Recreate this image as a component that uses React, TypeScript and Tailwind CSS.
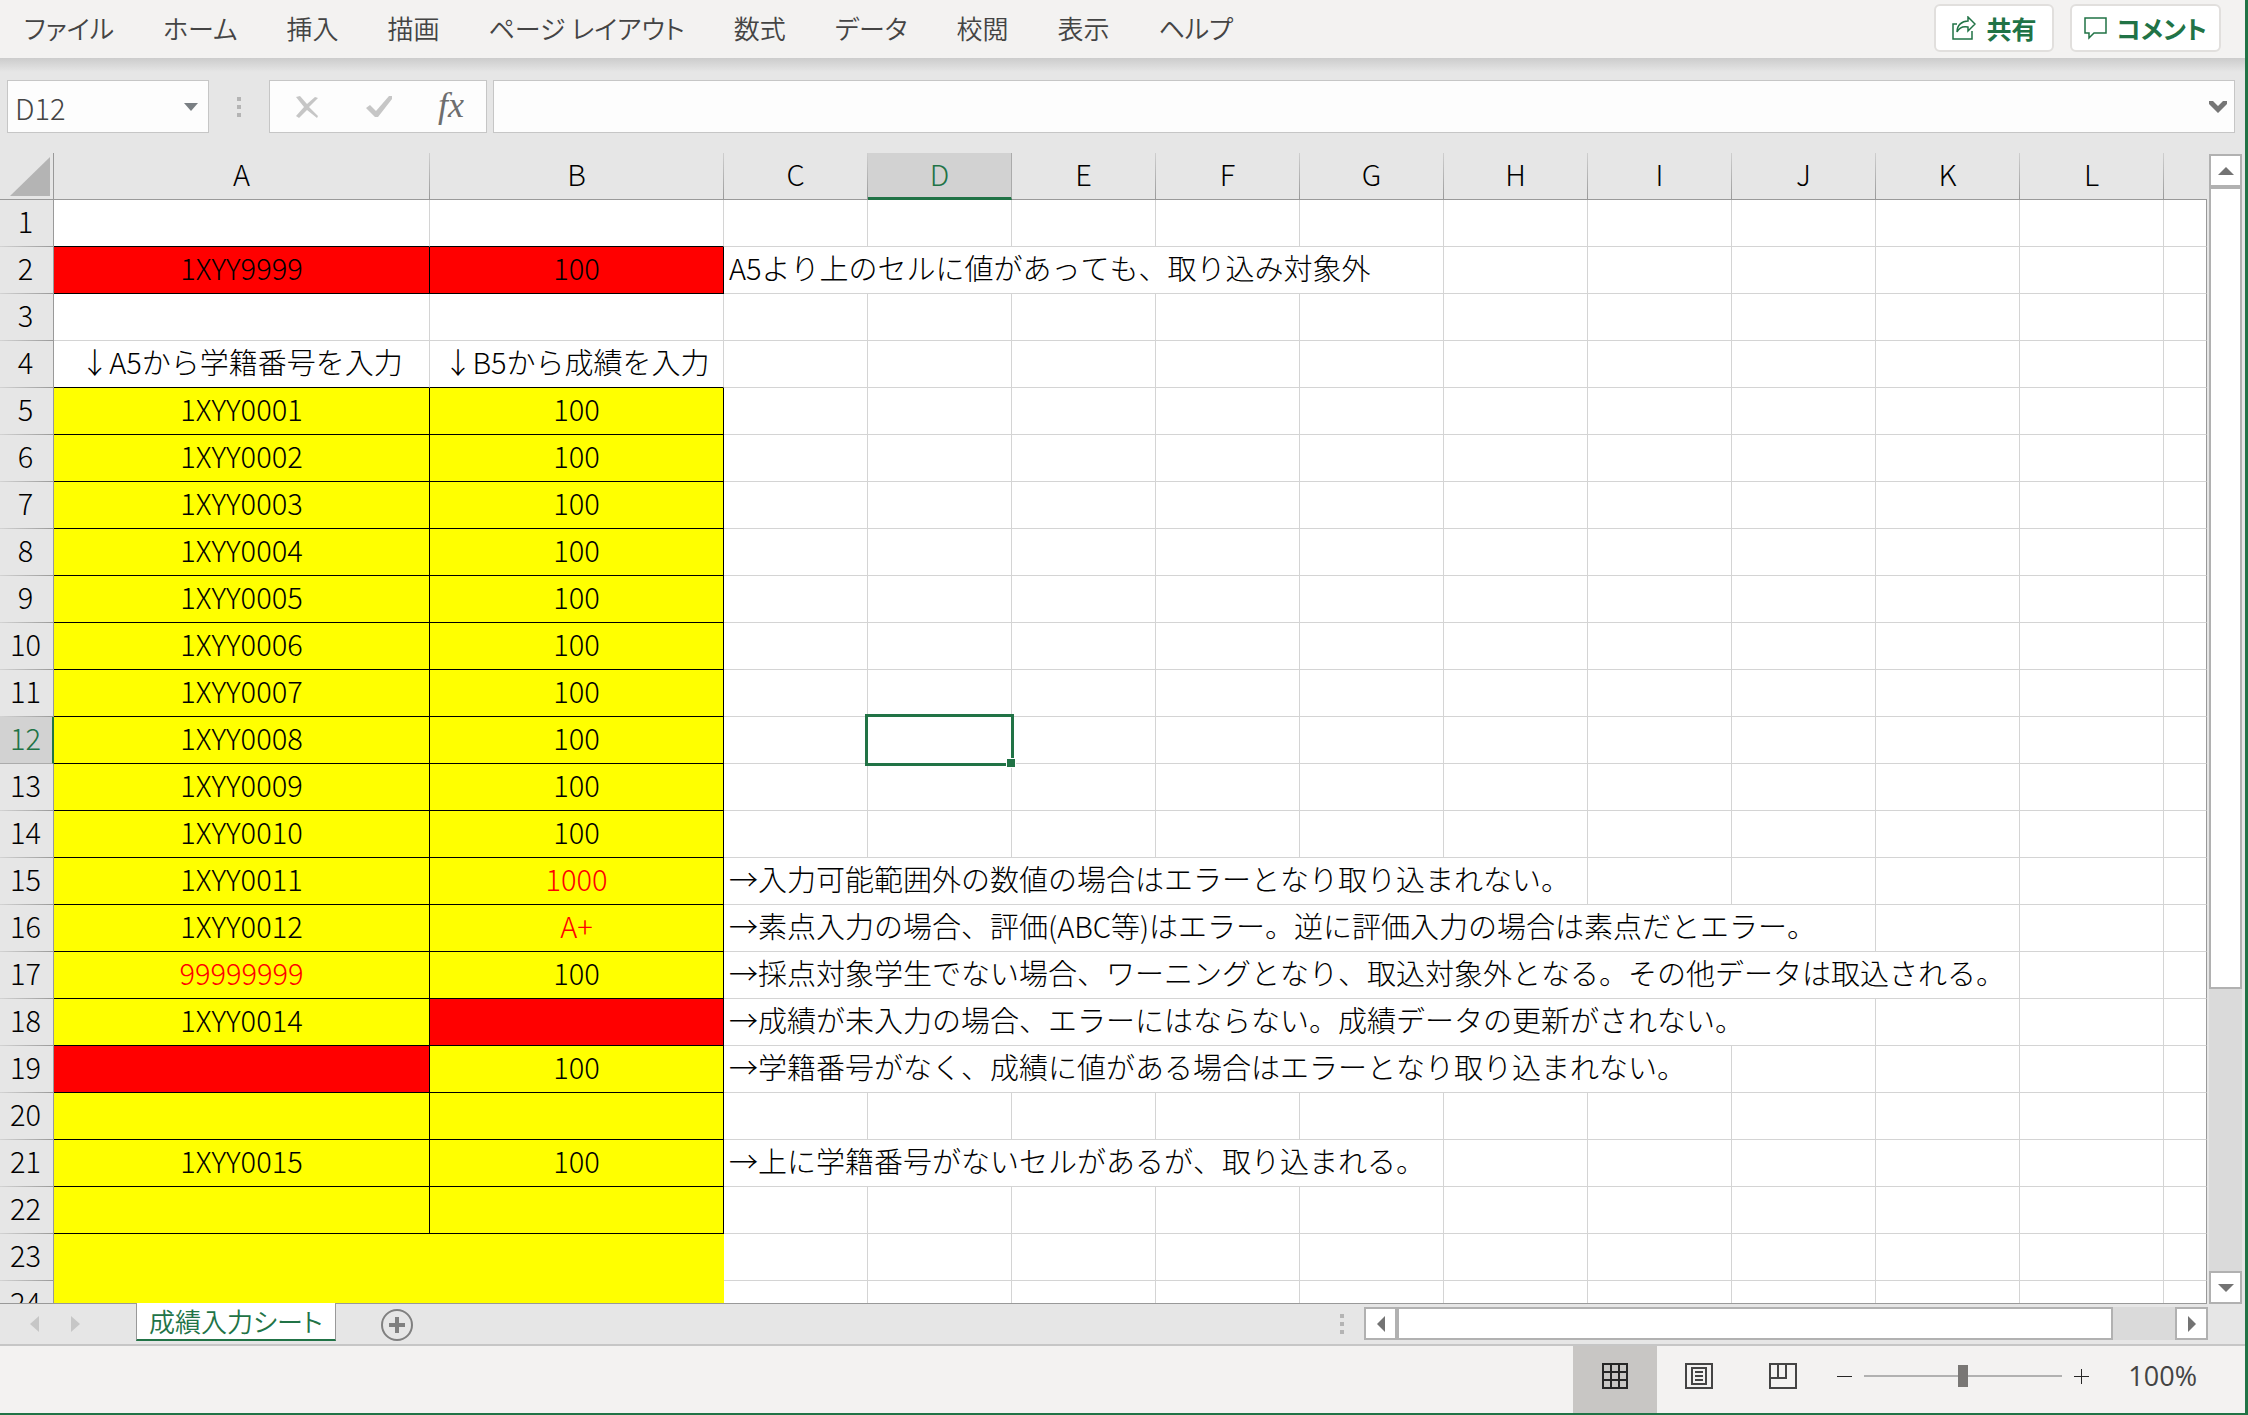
import React, { ReactNode, useState } from "react";

const LINE = "border-[#d4d4d4]";
const COLUMNS = ["A", "B", "C", "D", "E", "F", "G", "H", "I", "J", "K", "L"];
const MENUS = [
  "ファイル",
  "ホーム",
  "挿入",
  "描画",
  "ページ レイアウト",
  "数式",
  "データ",
  "校閲",
  "表示",
  "ヘルプ",
];

type Fill = "yellow" | "red";

interface RowData {
  a?: string;
  b?: string;
  aFill?: Fill;
  bFill?: Fill;
  aError?: boolean;
  bError?: boolean;
  note?: string;
  // number of columns the note runs over, starting at C
  span?: number;
}

const yellow: RowData = { aFill: "yellow", bFill: "yellow" };

const ROWS: RowData[] = [
  {},
  {
    a: "1XYY9999",
    b: "100",
    aFill: "red",
    bFill: "red",
    note: "A5より上のセルに値があっても、取り込み対象外",
    span: 5,
  },
  {},
  { a: "↓A5から学籍番号を入力", b: "↓B5から成績を入力" },
  { ...yellow, a: "1XYY0001", b: "100" },
  { ...yellow, a: "1XYY0002", b: "100" },
  { ...yellow, a: "1XYY0003", b: "100" },
  { ...yellow, a: "1XYY0004", b: "100" },
  { ...yellow, a: "1XYY0005", b: "100" },
  { ...yellow, a: "1XYY0006", b: "100" },
  { ...yellow, a: "1XYY0007", b: "100" },
  { ...yellow, a: "1XYY0008", b: "100" },
  { ...yellow, a: "1XYY0009", b: "100" },
  { ...yellow, a: "1XYY0010", b: "100" },
  {
    ...yellow,
    a: "1XYY0011",
    b: "1000",
    bError: true,
    note: "→入力可能範囲外の数値の場合はエラーとなり取り込まれない。",
    span: 6,
  },
  {
    ...yellow,
    a: "1XYY0012",
    b: "A+",
    bError: true,
    note: "→素点入力の場合、評価(ABC等)はエラー。逆に評価入力の場合は素点だとエラー。",
    span: 8,
  },
  {
    ...yellow,
    a: "99999999",
    b: "100",
    aError: true,
    note: "→採点対象学生でない場合、ワーニングとなり、取込対象外となる。その他データは取込される。",
    span: 9,
  },
  {
    ...yellow,
    a: "1XYY0014",
    bFill: "red",
    note: "→成績が未入力の場合、エラーにはならない。成績データの更新がされない。",
    span: 8,
  },
  {
    ...yellow,
    aFill: "red",
    b: "100",
    note: "→学籍番号がなく、成績に値がある場合はエラーとなり取り込まれない。",
    span: 7,
  },
  yellow,
  {
    ...yellow,
    a: "1XYY0015",
    b: "100",
    note: "→上に学籍番号がないセルがあるが、取り込まれる。",
    span: 5,
  },
  yellow,
  yellow,
  yellow,
];

function Dots() {
  return (
    <div className="flex flex-col gap-1">
      <span className="size-1 bg-[#b4b4b4]" />
      <span className="size-1 bg-[#b4b4b4]" />
      <span className="size-1 bg-[#b4b4b4]" />
    </div>
  );
}

function Ribbon() {
  return (
    <header className="flex h-[58px] shrink-0 items-center justify-between bg-[#f3f2f1] pr-6 pb-0.5 pl-6">
      <nav className="flex h-full items-center gap-[49px] text-[26px] font-[350] text-[#444] [font-feature-settings:'palt']">
        {MENUS.map((menu) => (
          <button key={menu} type="button" className="whitespace-nowrap">
            {menu}
          </button>
        ))}
      </nav>
      <div className="flex gap-4 text-[25px] font-bold text-[#217346] [font-feature-settings:'palt']">
        <button
          type="button"
          className="flex h-12 items-center gap-[10px] rounded-md border-2 border-[#e1dfdd] bg-white px-4 whitespace-nowrap"
        >
          <svg width="24" height="24" viewBox="0 0 24 24" fill="none" stroke="#217346" strokeWidth="1.5">
            <path d="M5 8H1v15h19v-8" />
            <path d="M16 1l7 7-7 7v-4C11 10 7 12 5 16 5 9 10 5 16 5z" />
          </svg>
          共有
        </button>
        <button
          type="button"
          className="flex h-12 items-center gap-2 rounded-md border-2 border-[#e1dfdd] bg-white px-3 whitespace-nowrap"
        >
          <svg width="24" height="24" viewBox="0 0 24 24" fill="none" stroke="#217346" strokeWidth="1.5">
            <path d="M1 2h21v15H10l-5 5v-5H1z" />
          </svg>
          コメント
        </button>
      </div>
    </header>
  );
}

function FormulaBar() {
  const [name, setName] = useState("D12");
  const [formula, setFormula] = useState("");

  return (
    <div className="flex h-[95px] shrink-0 items-start bg-[linear-gradient(#cccccc,#e6e6e6_14px)] pt-[22px] pr-[10px] pl-[7px]">
      <div className="flex h-[53px] w-[202px] items-center border border-[#c6c6c6] bg-[#fdfdfd] pr-[10px]">
        <input
          aria-label="名前ボックス"
          value={name}
          onChange={(event) => setName(event.target.value)}
          className="w-0 flex-1 bg-transparent pl-[7px] font-light text-[#444] outline-none"
        />
        <button type="button" aria-label="名前の一覧">
          <svg width="14" height="8" viewBox="0 0 14 8">
            <path d="M0 0h14L7 8z" fill="#7a7f83" />
          </svg>
        </button>
      </div>
      <div className="flex h-[53px] w-[60px] items-center justify-center">
        <Dots />
      </div>
      <div className="flex h-[53px] w-[218px] items-center justify-between border border-[#c6c6c6] bg-[#fdfdfd] pr-[22px] pl-[25px]">
        <button type="button" aria-label="キャンセル">
          <svg width="24" height="22" viewBox="0 0 24 22" fill="#c6c6c6">
            <path d="M1 1l4-1 7 8 8-7 3 1-9 9 9 9-1 2-10-8-8 8-3-2 8-9z" />
          </svg>
        </button>
        <button type="button" aria-label="入力">
          <svg width="26" height="22" viewBox="0 0 26 22" fill="#c6c6c6">
            <path d="M0 12l4-3 6 6L23 0h3v3L12 21H9z" />
          </svg>
        </button>
        <button
          type="button"
          aria-label="関数の挿入"
          className="pb-1 font-['Liberation_Serif',serif] text-[36px] leading-10 text-[#6e6e6e] italic"
        >
          fx
        </button>
      </div>
      <div className="ml-[6px] flex h-[53px] flex-1 items-center border border-[#c6c6c6] bg-[#fdfdfd] pr-[7px]">
        <input
          aria-label="数式バー"
          value={formula}
          onChange={(event) => setFormula(event.target.value)}
          className="h-full w-0 flex-1 bg-transparent px-2 font-light outline-none"
        />
        <button type="button" aria-label="数式バーの展開">
          <svg width="18" height="12" viewBox="0 0 18 12" fill="#767676">
            <path d="M0 0h4l5 5 5-5h4v3l-9 9-9-9z" />
          </svg>
        </button>
      </div>
    </div>
  );
}

function DataCell({
  children,
  fill,
  error,
  lineBelow,
  lineRight,
  lastFill,
}: {
  children?: ReactNode;
  fill?: Fill;
  error?: boolean;
  lineBelow: boolean;
  lineRight: boolean;
  lastFill: boolean;
}) {
  const bg =
    fill === "red" ? "bg-[#ff0000]" : fill === "yellow" ? "bg-[#ffff00]" : "";
  const below = lineBelow
    ? "border-b-black"
    : lastFill
      ? "border-b-[#ffff00]"
      : "border-b-[#d4d4d4]";
  const right = lineRight
    ? "border-r-black"
    : lastFill
      ? "border-r-[#ffff00]"
      : "border-r-[#d4d4d4]";
  return (
    <td
      className={`h-[47px] border-r border-b p-0 pb-[6px] text-center whitespace-nowrap ${bg} ${below} ${right} ${
        error ? "text-[#ff0000]" : ""
      }`}
    >
      {children}
    </td>
  );
}

function Selection() {
  return (
    <div className="absolute -inset-[3px] z-10 border-3 border-[#217346]">
      <span className="absolute -right-[5px] -bottom-[5px] size-[10px] border border-white bg-[#217346]" />
    </div>
  );
}

function SheetRow({ row, no }: { row: RowData; no: number }) {
  const selected = no === 12;
  const boxed = no === 2 || (no >= 5 && no <= 22);
  const lineBelow = boxed || no === 1 || no === 4;
  const lastFill = no > 22;
  const span = row.span ?? 0;
  const rest = COLUMNS.slice(2 + span);

  return (
    <tr>
      <th
        scope="row"
        className={`h-[47px] border-b p-0 pb-[6px] text-center font-light ${
          selected
            ? "border-r-2 border-r-[#217346] border-b-[#ababab] bg-[#d2d2d2] pr-px text-[#217346]"
            : "border-r bg-[#e6e6e6] pr-0.5 [border-image:linear-gradient(to_right,#d4d4d4,#999999)_1]"
        }`}
      >
        {no}
      </th>
      <DataCell fill={row.aFill} error={row.aError} lineBelow={lineBelow} lineRight={boxed} lastFill={lastFill}>
        {row.a}
      </DataCell>
      <DataCell fill={row.bFill} error={row.bError} lineBelow={lineBelow} lineRight={boxed} lastFill={lastFill}>
        {row.b}
      </DataCell>
      {row.note && (
        <td colSpan={span} className={`border-r border-b p-0 pb-[6px] pl-[5px] whitespace-nowrap ${LINE}`}>
          {row.note}
        </td>
      )}
      {rest.map((column) =>
        selected && column === "D" ? (
          <td key={column} className={`relative z-10 border-r border-b p-0 ${LINE}`}>
            <Selection />
          </td>
        ) : (
          <td key={column} className={`border-r border-b p-0 ${LINE}`} />
        ),
      )}
      <td className="border-r border-b border-r-[#999] border-b-[#d4d4d4] p-0" />
    </tr>
  );
}

function Sheet() {
  return (
    <div className="min-w-0 flex-1 overflow-hidden border-b border-[#999]">
      <table className="w-full table-fixed border-separate border-spacing-0 font-light text-black [font-kerning:none]">
        <colgroup>
          <col className="w-[54px]" />
          <col className="w-[376px]" />
          <col className="w-[294px]" />
          {COLUMNS.slice(2).map((column) => (
            <col key={column} className="w-[144px]" />
          ))}
          <col />
        </colgroup>
        <thead>
          <tr>
            <th className="h-[47px] border-r border-b border-[#999] bg-[#e6e6e6] p-0">
              <button type="button" aria-label="すべて選択" className="flex w-full justify-end pr-[3px]">
                <svg width="40" height="39" viewBox="0 0 40 39">
                  <path d="M40 0v39H0z" fill="#b4b4b4" />
                </svg>
              </button>
            </th>
            {COLUMNS.map((column) => (
              <th
                key={column}
                scope="col"
                className={`h-[47px] p-0 text-center font-light ${
                  column === "D"
                    ? "border-r border-b-3 border-r-[#ababab] border-b-[#217346] bg-[#d2d2d2] pb-1 text-[#217346]"
                    : "border-r border-b bg-[#e6e6e6] pb-[6px] [border-image:linear-gradient(#d0d0d0,#999999)_1]"
                }`}
              >
                {column}
              </th>
            ))}
            <th className="border-b border-[#999] bg-[#e6e6e6] p-0" />
          </tr>
        </thead>
        <tbody className="bg-white">
          {ROWS.map((row, index) => (
            <SheetRow key={index} row={row} no={index + 1} />
          ))}
        </tbody>
      </table>
    </div>
  );
}

function ScrollButton({ label, path }: { label: string; path: string }) {
  return (
    <button
      type="button"
      aria-label={label}
      className="flex size-[33px] shrink-0 items-center justify-center border-2 border-[#b1b1b1] bg-white"
    >
      <svg width="16" height="16" viewBox="0 0 16 16" fill="#737373">
        <path d={path} />
      </svg>
    </button>
  );
}

function VerticalScroll() {
  return (
    <div className="flex w-[38px] shrink-0 flex-col pt-px pr-[3px] pl-[2px]">
      <ScrollButton label="上へスクロール" path="M0 12h16L8 4z" />
      <div className="flex-1 bg-[#dadada]">
        <div className="h-[74%] border-2 border-[#b1b1b1] bg-white" />
      </div>
      <ScrollButton label="下へスクロール" path="M0 4h16L8 12z" />
    </div>
  );
}

function TabBar() {
  return (
    <div className="flex h-[42px] shrink-0 items-start justify-between border-b-2 border-[#c6c6c6]">
      <div className="flex items-start">
        <div className="flex h-10 w-[136px] items-center gap-8 pl-[30px]">
          <button type="button" aria-label="前のシート">
            <svg width="9" height="16" viewBox="0 0 9 16">
              <path d="M9 0v16L0 8z" fill="#c6c6c6" />
            </svg>
          </button>
          <button type="button" aria-label="次のシート">
            <svg width="9" height="16" viewBox="0 0 9 16">
              <path d="M0 0v16l9-8z" fill="#c6c6c6" />
            </svg>
          </button>
        </div>
        <button
          type="button"
          className="-mt-px h-[38px] border-x border-b-2 border-x-[#999] border-b-[#217346] bg-white px-3 text-[26px] leading-9 font-[350] whitespace-nowrap text-[#217346] [font-feature-settings:'palt']"
        >
          成績入力シート
        </button>
        <button type="button" aria-label="新しいシート" className="mt-1 ml-[44px]">
          <svg width="34" height="34" viewBox="0 0 34 34" fill="none" stroke="#808080">
            <circle cx="17" cy="17" r="15" strokeWidth="2" />
            <path d="M17 9v16M9 17h16" strokeWidth="4" />
          </svg>
        </button>
      </div>
      <div className="flex items-center pt-[3px] pr-[37px]">
        <div className="mr-5">
          <Dots />
        </div>
        <div className="flex w-[844px]">
          <ScrollButton label="左へスクロール" path="M12 0v16L4 8z" />
          <div className="flex-1 bg-[#dadada]">
            <div className="h-full w-[92%] border-2 border-[#b1b1b1] bg-white" />
          </div>
          <ScrollButton label="右へスクロール" path="M4 0v16l8-8z" />
        </div>
      </div>
    </div>
  );
}

function StatusBar() {
  const [zoom, setZoom] = useState(100);

  return (
    <footer className="flex h-[67px] shrink-0 items-center justify-end bg-[#f3f2f1] pr-12">
      <button
        type="button"
        aria-label="標準"
        className="flex h-full w-[84px] justify-center bg-[#c8c6c4] pt-[17px]"
      >
        <svg width="26" height="26" viewBox="0 0 26 26" fill="none" stroke="#262626" strokeWidth="2">
          <path d="M1 1h24v24H1zM9 1v24M17 1v24M1 9h24M1 17h24" />
        </svg>
      </button>
      <button type="button" aria-label="ページ レイアウト" className="flex h-full w-[84px] justify-center pt-[17px]">
        <svg width="28" height="26" viewBox="0 0 28 26" fill="none" stroke="#444" strokeWidth="2">
          <path d="M1 1h26v24H1zM7 5h14v16H7zM10 9h8M10 13h8M10 17h8" />
        </svg>
      </button>
      <button type="button" aria-label="改ページ プレビュー" className="flex h-full w-[84px] justify-center pt-[17px]">
        <svg width="28" height="26" viewBox="0 0 28 26" fill="none" stroke="#444" strokeWidth="2">
          <path d="M1 1h26v24H1zM9 1v14M1 15h16V1" />
        </svg>
      </button>
      <div className="ml-3 flex items-center pb-[7px]">
        <button type="button" aria-label="縮小" onClick={() => setZoom((prev) => Math.max(0, prev - 10))}>
          <svg width="15" height="15" viewBox="0 0 15 15">
            <path d="M0 7h15v1H0z" fill="#262626" />
          </svg>
        </button>
        <input
          type="range"
          aria-label="ズーム"
          min={0}
          max={200}
          value={zoom}
          onChange={(event) => setZoom(Number(event.target.value))}
          className="mx-3 h-[2px] w-[198px] appearance-none bg-[#b1b1b1] [&::-webkit-slider-thumb]:h-[22px] [&::-webkit-slider-thumb]:w-[10px] [&::-webkit-slider-thumb]:appearance-none [&::-webkit-slider-thumb]:bg-[#797775]"
        />
        <button type="button" aria-label="拡大" onClick={() => setZoom((prev) => Math.min(200, prev + 10))}>
          <svg width="15" height="15" viewBox="0 0 15 15">
            <path d="M0 7h15v1H0zM7 0h1v15H7z" fill="#262626" />
          </svg>
        </button>
        <span className="ml-[38px] w-[70px] text-right font-['Open_Sans','Noto_Sans',sans-serif] text-[27px] leading-8 text-[#444]">
          {zoom}%
        </span>
      </div>
    </footer>
  );
}

export default function App() {
  return (
    <div className="flex h-screen flex-col overflow-hidden border-r-3 border-b-2 border-[#217346] bg-[#e6e6e6] font-['Noto_Sans_CJK_JP',sans-serif] text-[29px] leading-10">
      <Ribbon />
      <FormulaBar />
      <main className="flex min-h-0 flex-1">
        <Sheet />
        <VerticalScroll />
      </main>
      <TabBar />
      <StatusBar />
    </div>
  );
}
